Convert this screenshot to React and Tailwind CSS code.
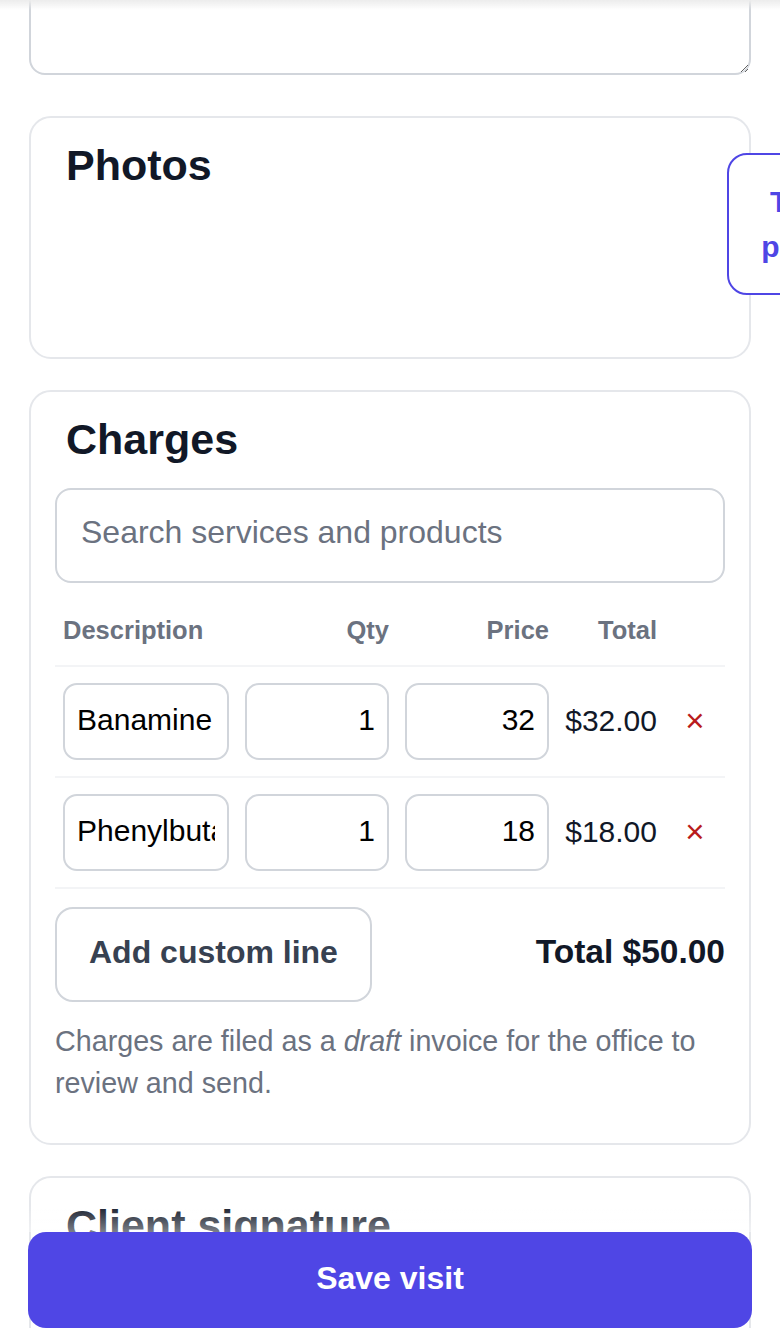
import React from "react";

export default function App() {
  const rows = [
    { desc: "Banamine", qty: "1", price: "32", total: "$32.00" },
    { desc: "Phenylbutazone", qty: "1", price: "18", total: "$18.00" },
  ];
  return (
    <div className="h-screen overflow-hidden bg-white font-['Liberation_Sans',Arial,sans-serif]">
      <div className="flex flex-col px-[29px]">
        <textarea
          className="-mt-[40px] block h-[115px] w-full resize-y rounded-[16px] border-2 border-[#d1d5db] bg-white outline-none"
          defaultValue=""
        />

        {/* Photos */}
        <section className="mt-[41px] flex h-[243px] items-start rounded-[22px] border-2 border-[#e5e7eb] bg-white p-[24px]">
          <h2 className="w-[672px] shrink-0 pl-[11px] text-[43px] font-bold leading-[46px] text-[#111827]">
            Photos
          </h2>
          <button className="mt-[11px] w-[152px] shrink-0 rounded-[20px] border-2 border-[#4f46e5] bg-white px-[32px] py-[24px] text-center text-[30px] font-bold leading-[45px] text-[#4f46e5]">
            Take photo
          </button>
        </section>

        {/* Charges */}
        <section className="mt-[31px] rounded-[22px] border-2 border-[#e5e7eb] bg-white px-[24px] pb-[39px] pt-[24px]">
          <h2 className="pl-[11px] text-[43px] font-bold leading-[46px] text-[#111827]">
            Charges
          </h2>
          <input
            className="mt-[26px] block h-[95px] w-full rounded-[16px] border-2 border-[#d1d5db] px-[24px] pb-[6px] text-[32px] text-black outline-none placeholder:text-[#6b7280]"
            placeholder="Search services and products"
          />
          <table className="mt-[12px] w-full table-fixed border-collapse">
            <colgroup>
              <col className="w-[182px]" />
              <col className="w-[160px]" />
              <col className="w-[160px]" />
              <col className="w-[108px]" />
              <col className="w-[60px]" />
            </colgroup>
            <thead>
              <tr className="border-b-2 border-[#f3f4f6]">
                <th className="px-[8px] py-[17px] text-left text-[25.5px] font-bold leading-[36px] text-[#6b7280]">
                  Description
                </th>
                <th className="px-[8px] py-[17px] text-right text-[25.5px] font-bold leading-[36px] text-[#6b7280]">
                  Qty
                </th>
                <th className="px-[8px] py-[17px] text-right text-[25.5px] font-bold leading-[36px] text-[#6b7280]">
                  Price
                </th>
                <th className="px-[8px] py-[17px] text-right text-[25.5px] font-bold leading-[36px] text-[#6b7280]">
                  Total
                </th>
                <th className="px-[8px] py-[17px]" />
              </tr>
            </thead>
            <tbody>
              {rows.map((r) => (
                <tr key={r.desc} className="border-b-2 border-[#f3f4f6]">
                  <td className="px-[8px] py-[16px]">
                    <input
                      className="block h-[77px] w-full rounded-[14px] border-2 border-[#d1d5db] px-[12px] pb-[3px] text-[30px] text-black outline-none"
                      defaultValue={r.desc}
                    />
                  </td>
                  <td className="px-[8px] py-[16px]">
                    <input
                      className="block h-[77px] w-full rounded-[14px] border-2 border-[#d1d5db] px-[12px] pb-[3px] text-right text-[30px] text-black outline-none"
                      defaultValue={r.qty}
                    />
                  </td>
                  <td className="px-[8px] py-[16px]">
                    <input
                      className="block h-[77px] w-full rounded-[14px] border-2 border-[#d1d5db] px-[12px] pb-[3px] text-right text-[30px] text-black outline-none"
                      defaultValue={r.price}
                    />
                  </td>
                  <td className="px-[8px] pb-[19px] pt-[16px] text-right text-[30px] text-[#111827]">
                    {r.total}
                  </td>
                  <td className="px-[8px] pb-[19px] pt-[16px] text-center text-[33px] leading-none text-[#b91c1c]">
                    ×
                  </td>
                </tr>
              ))}
            </tbody>
          </table>
          <div className="mt-[18px] flex items-center justify-between">
            <button className="h-[95px] rounded-[18px] border-2 border-[#d1d5db] bg-white px-[32px] pb-[6px] text-[32px] font-bold text-[#374151]">
              Add custom line
            </button>
            <div className="pb-[4px] text-[33.5px] font-bold text-[#111827]">Total $50.00</div>
          </div>
          <p className="mt-[18px] text-[28.7px] leading-[42px] text-[#6b7280]">
            Charges are filed as a <em className="italic">draft</em> invoice for the office to review and send.
          </p>
        </section>

        {/* Client signature */}
        <section className="mt-[31px] rounded-[22px] border-2 border-[#e5e7eb] bg-white p-[24px]">
          <h2 className="pl-[11px] text-[43px] font-bold leading-[46px] text-[#111827]">
            Client signature
          </h2>
          <div className="mt-[24px] h-[300px] rounded-[16px] border-2 border-dashed border-[#d1d5db]" />
        </section>
      </div>

      <div className="pointer-events-none fixed inset-x-0 top-0 h-[10px] bg-linear-to-b from-[#ececec] to-white/0" />

      <div className="fixed inset-x-0 bottom-0 flex flex-col px-[28px]">
        <div className="h-[28px] bg-linear-to-b from-white/0 to-white/45" />
        <button className="h-[96px] w-full rounded-[18px] bg-[#4f46e5] pb-[4px] text-[32px] font-bold text-white">
          Save visit
        </button>
      </div>
    </div>
  );
}
